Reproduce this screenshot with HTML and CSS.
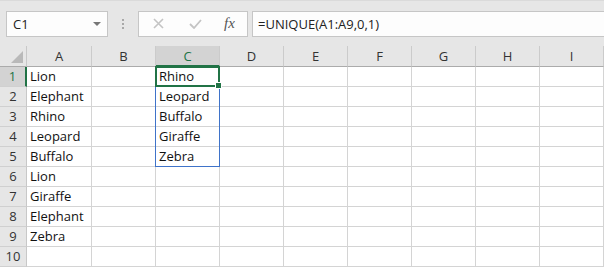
FILE: index.html
```html
<html>
	<head>
		<meta charset="utf-8" />
		<title>UNIQUE</title>
		<link rel="stylesheet" href="styles.css">
	</head>
	<body>
		<div class="toolbar">
			<div class="name-box">C1<span class="drop"></span></div>
			<div class="grip"><i></i><i></i><i></i></div>
			<div class="fx-box">
				<svg class="cancel" width="11" height="11" viewBox="0 0 11 11"><path d="M1 1L10 10M10 1L1 10" stroke="#c4c4c4" stroke-width="1.6" fill="none"/></svg>
				<svg class="enter" width="13" height="10" viewBox="0 0 13 10"><path d="M1 5L5 9L12 1" stroke="#c4c4c4" stroke-width="1.8" fill="none"/></svg>
				<span class="fx">fx</span>
			</div>
			<div class="formula">=UNIQUE(A1:A9,0,1)</div>
		</div>
		<div class="sheet">
			<div class="corner"><svg width="12" height="12" viewBox="0 0 12 12"><path d="M12 0V12H0Z" fill="#b9b9b9"/></svg></div>
			<div class="col-head">A</div>
			<div class="col-head">B</div>
			<div class="col-head active">C</div>
			<div class="col-head">D</div>
			<div class="col-head">E</div>
			<div class="col-head">F</div>
			<div class="col-head">G</div>
			<div class="col-head">H</div>
			<div class="col-head">I</div>
			<div class="col-head"></div>

			<div class="row-head active">1</div><div class="cell">Lion</div><div class="cell"></div><div class="cell">Rhino</div><div class="cell"></div><div class="cell"></div><div class="cell"></div><div class="cell"></div><div class="cell"></div><div class="cell"></div><div class="cell"></div>
			<div class="row-head">2</div><div class="cell">Elephant</div><div class="cell"></div><div class="cell">Leopard</div><div class="cell"></div><div class="cell"></div><div class="cell"></div><div class="cell"></div><div class="cell"></div><div class="cell"></div><div class="cell"></div>
			<div class="row-head">3</div><div class="cell">Rhino</div><div class="cell"></div><div class="cell">Buffalo</div><div class="cell"></div><div class="cell"></div><div class="cell"></div><div class="cell"></div><div class="cell"></div><div class="cell"></div><div class="cell"></div>
			<div class="row-head">4</div><div class="cell">Leopard</div><div class="cell"></div><div class="cell">Giraffe</div><div class="cell"></div><div class="cell"></div><div class="cell"></div><div class="cell"></div><div class="cell"></div><div class="cell"></div><div class="cell"></div>
			<div class="row-head">5</div><div class="cell">Buffalo</div><div class="cell"></div><div class="cell">Zebra</div><div class="cell"></div><div class="cell"></div><div class="cell"></div><div class="cell"></div><div class="cell"></div><div class="cell"></div><div class="cell"></div>
			<div class="row-head">6</div><div class="cell">Lion</div><div class="cell"></div><div class="cell"></div><div class="cell"></div><div class="cell"></div><div class="cell"></div><div class="cell"></div><div class="cell"></div><div class="cell"></div><div class="cell"></div>
			<div class="row-head">7</div><div class="cell">Giraffe</div><div class="cell"></div><div class="cell"></div><div class="cell"></div><div class="cell"></div><div class="cell"></div><div class="cell"></div><div class="cell"></div><div class="cell"></div><div class="cell"></div>
			<div class="row-head">8</div><div class="cell">Elephant</div><div class="cell"></div><div class="cell"></div><div class="cell"></div><div class="cell"></div><div class="cell"></div><div class="cell"></div><div class="cell"></div><div class="cell"></div><div class="cell"></div>
			<div class="row-head">9</div><div class="cell">Zebra</div><div class="cell"></div><div class="cell"></div><div class="cell"></div><div class="cell"></div><div class="cell"></div><div class="cell"></div><div class="cell"></div><div class="cell"></div><div class="cell"></div>
			<div class="row-head">10</div><div class="cell"></div><div class="cell"></div><div class="cell"></div><div class="cell"></div><div class="cell"></div><div class="cell"></div><div class="cell"></div><div class="cell"></div><div class="cell"></div><div class="cell"></div>

			<div class="spill"></div>
			<div class="selection"><span class="handle"></span></div>
		</div>
	</body>
</html>
```

FILE: styles.css
```css
body {
	margin: 0;
	background: #fff;
	font-family: "Open Sans", "Liberation Sans", sans-serif;
	overflow: hidden;
}

.toolbar {
	display: flex;
	align-items: center;
	height: 46px;
	padding: 0 0 0 6px;
	background: #e6e6e6;
	box-sizing: border-box;
	border-top: 1px solid #dadada;
}

.name-box,
.fx-box,
.formula {
	box-sizing: border-box;
	height: 26px;
	border: 1px solid #c6c6c6;
	background: #fdfdfd;
	display: flex;
	align-items: center;
	font-size: 13px;
	color: #222;
}

.name-box {
	width: 102px;
	padding-left: 6px;
	justify-content: space-between;
	padding-right: 6px;
}

.drop {
	width: 0;
	height: 0;
	border-left: 4px solid transparent;
	border-right: 4px solid transparent;
	border-top: 4px solid #777;
}

.grip {
	display: flex;
	flex-direction: column;
	gap: 2px;
	margin: 0 14px 0 14px;
}

.grip i {
	display: block;
	width: 2px;
	height: 2px;
	background: #a8a8a8;
}

.fx-box {
	width: 110px;
	padding-left: 14px;
}

.cancel {
	margin-right: 25px;
}

.enter {
	margin-right: 22px;
}

.fx {
	font-family: "Liberation Serif", serif;
	font-style: italic;
	font-size: 15px;
	color: #555;
}

.formula {
	flex: 1;
	margin-left: 4px;
	padding-left: 5px;
	border-right: none;
}

.sheet {
	position: relative;
	display: grid;
	grid-template-columns: 27px 65px repeat(8, 64px) 1fr;
	grid-template-rows: 21px repeat(10, 20px);
	font-size: 13px;
}

.sheet > div {
	box-sizing: border-box;
}

.corner {
	background: #e6e6e6;
	border-right: 1px solid #c8c8c8;
	border-bottom: 1px solid #ababab;
	display: flex;
	justify-content: flex-end;
	align-items: flex-end;
	padding: 0 3px 3px 0;
}

.col-head {
	background: #e6e6e6;
	border-right: 1px solid #cbcbcb;
	border-bottom: 1px solid #ababab;
	text-align: center;
	line-height: 20px;
	color: #333;
}

.col-head.active {
	background: #d3d3d3;
	color: #217346;
	border-bottom: 2px solid #217346;
}

.row-head {
	background: #e6e6e6;
	border-right: 1px solid #c8c8c8;
	border-bottom: 1px solid #d0d0d0;
	text-align: center;
	line-height: 19px;
	color: #333;
}

.row-head.active {
	background: #d3d3d3;
	color: #217346;
	border-right: 2px solid #217346;
}

.cell {
	border-right: 1px solid #d4d4d4;
	border-bottom: 1px solid #d4d4d4;
	padding-left: 3px;
	line-height: 19px;
	color: #111;
	white-space: nowrap;
}

.spill {
	position: absolute;
	grid-column: 4 / 5;
	grid-row: 2 / 7;
	top: -1px;
	left: -1px;
	right: 0;
	bottom: 0;
	border: 1px solid #3f73c9;
	pointer-events: none;
}

.selection {
	position: absolute;
	grid-column: 4 / 5;
	grid-row: 2 / 3;
	top: -1px;
	left: -1px;
	right: 0;
	bottom: 0;
	border: 2px solid #217346;
}

.handle {
	position: absolute;
	right: -4px;
	bottom: -4px;
	width: 5px;
	height: 5px;
	background: #217346;
	border: 1px solid #fff;
}
```
